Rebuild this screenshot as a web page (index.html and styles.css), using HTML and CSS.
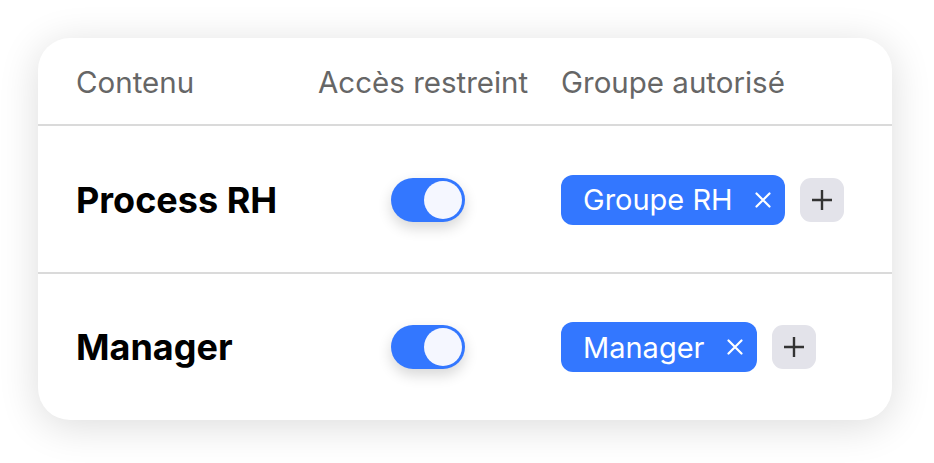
FILE: index.html
```html
<!DOCTYPE html>
<html lang="fr">
<head>
<meta charset="utf-8">
<title>Accès</title>
<link rel="stylesheet" href="styles.css">
</head>
<body>
<div class="card">
  <div class="row head">
    <div class="col">Contenu</div>
    <div class="col">Accès restreint</div>
    <div class="col">Groupe autorisé</div>
  </div>
  <div class="row item">
    <div class="col name">Process RH</div>
    <div class="col"><span class="toggle"><span class="knob"></span></span></div>
    <div class="col groups">
      <span class="tag">Groupe RH<svg class="x" viewBox="0 0 16 16" width="16" height="16"><path d="M1.5 1.5L14.5 14.5M14.5 1.5L1.5 14.5" stroke="#fff" stroke-width="2.2" stroke-linecap="round"/></svg></span>
      <span class="add"><svg viewBox="0 0 20 20" width="20" height="20"><path d="M10 0V20M0 10H20" stroke="#333" stroke-width="2.4"/></svg></span>
    </div>
  </div>
  <div class="row item">
    <div class="col name">Manager</div>
    <div class="col"><span class="toggle"><span class="knob"></span></span></div>
    <div class="col groups">
      <span class="tag">Manager<svg class="x" viewBox="0 0 16 16" width="16" height="16"><path d="M1.5 1.5L14.5 14.5M14.5 1.5L1.5 14.5" stroke="#fff" stroke-width="2.2" stroke-linecap="round"/></svg></span>
      <span class="add"><svg viewBox="0 0 20 20" width="20" height="20"><path d="M10 0V20M0 10H20" stroke="#333" stroke-width="2.4"/></svg></span>
    </div>
  </div>
</div>
</body>
</html>
```
FILE: styles.css
```css
html, body {
  margin: 0;
  padding: 0;
  background: #ffffff;
}
body {
  font-family: "Inter", "Liberation Sans", sans-serif;
  padding: 38px 0 0 38px;
  min-height: 463px;
  box-sizing: border-box;
}
.card {
  width: 854px;
  height: 382px;
  box-sizing: border-box;
  background: #fff;
  border-radius: 32px;
  box-shadow: 0 6px 40px rgba(0, 0, 0, 0.14);
  overflow: hidden;
}
.row {
  display: grid;
  grid-template-columns: 242px 243px 1fr;
  align-items: center;
  padding-left: 38px;
}
.head {
  height: 88px;
  padding-top: 2px;
  font-size: 29.5px;
  color: #666;
  border-bottom: 2px solid #dadada;
  box-sizing: border-box;
}
.item {
  height: 146px;
  padding-top: 1px;
  box-sizing: border-box;
}
.item + .item {
  border-top: 2px solid #dadada;
  height: 148px;
  padding-top: 0;
}
.name {
  font-size: 36px;
  font-weight: 700;
  color: #000;
}
.toggle {
  display: flex;
  justify-content: flex-end;
  align-items: center;
  width: 74px;
  height: 44px;
  margin-left: 73px;
  padding: 0 3px;
  box-sizing: border-box;
  border-radius: 22px;
  background: #3377ff;
  box-shadow: 0 6px 14px rgba(0, 0, 0, 0.16);
}
.knob {
  width: 38px;
  height: 38px;
  border-radius: 50%;
  background: #f5f7ff;
}
.groups {
  display: flex;
  align-items: center;
  gap: 15px;
}
.tag {
  display: inline-flex;
  align-items: center;
  gap: 22px;
  height: 50px;
  padding: 0 14px 0 22px;
  border-radius: 12px;
  background: #3377ff;
  color: #fff;
  font-size: 29px;
}
.add {
  display: inline-flex;
  align-items: center;
  justify-content: center;
  width: 44px;
  height: 44px;
  border-radius: 11px;
  background: #e3e3ea;
}
```
